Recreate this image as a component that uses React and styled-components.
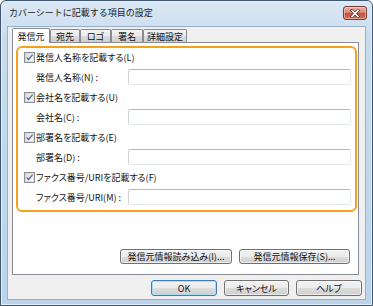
import React from 'react'
import styled, { createGlobalStyle } from 'styled-components'

const GlobalStyle = createGlobalStyle`
  html, body {
    margin: 0;
    padding: 0;
    background: #ffffff;
  }
  * {
    box-sizing: border-box;
  }
  body {
    font-family: "Noto Sans CJK JP", "Noto Sans", sans-serif;
    font-size: 9px;
    color: #111;
  }
`

const Window = styled.div`
  width: 373px;
  height: 306px;
  display: flex;
  flex-direction: column;
  border: 1px solid #3f5670;
  border-radius: 6px 6px 0 0;
  background: linear-gradient(180deg, #dbe8f5 0%, #c9dcef 12%, #bcd3ea 100%);
  box-shadow: inset 0 0 0 1px #e6eff8;
`

const TitleBar = styled.div`
  height: 25px;
  display: flex;
  align-items: center;
  justify-content: space-between;
  padding: 0 5px 3px 8px;
`

const Title = styled.span`
  font-size: 9px;
  line-height: 1;
  color: #222;
`

const CloseButton = styled.div`
  width: 24px;
  height: 14px;
  margin-top: 2px;
  display: flex;
  align-items: center;
  justify-content: center;
  border: 1px solid #7a3a34;
  border-radius: 3px;
  background: linear-gradient(180deg, #e8b0a4 0%, #d88c7c 45%, #c24f3c 50%, #d4705e 100%);
  box-shadow: inset 0 0 0 1px rgba(255, 220, 210, 0.5);
`

const Client = styled.div`
  flex: 1;
  margin: 0 6px 5px 6px;
  padding: 1px 2px 0 4px;
  background: #f0f0f0;
  border: 1px solid #9aafc6;
  display: flex;
  flex-direction: column;
  font-feature-settings: "palt";
`

const TabRow = styled.div`
  height: 14px;
  display: flex;
  align-items: flex-end;
  position: relative;
  z-index: 1;
`

const Tab = styled.div`
  width: ${(p) => p.$w}px;
  height: ${(p) => (p.$active ? 15 : 13)}px;
  margin-bottom: ${(p) => (p.$active ? -1 : 0)}px;
  display: flex;
  align-items: center;
  justify-content: center;
  border: 1px solid #898c95;
  border-bottom: none;
  border-radius: 2px 2px 0 0;
  background: ${(p) =>
    p.$active ? '#ffffff' : 'linear-gradient(180deg, #f3f3f3 0%, #ebebeb 50%, #dddddd 51%, #cfcfcf 100%)'};
  font-size: 9px;
  line-height: 1;
  padding-top: ${(p) => (p.$active ? 0 : 1)}px;
`

const Panel = styled.div`
  height: 233px;
  margin-right: 4px;
  border: 1px solid #898c95;
  background: #ffffff;
  padding: 3px 1px 10px 3px;
  display: flex;
  flex-direction: column;
`

const Highlight = styled.div`
  height: 166px;
  border: 2px solid #f6a11a;
  border-radius: 6px;
  padding: 1px 4px 0 6px;
  display: flex;
  flex-direction: column;
  gap: 4px;
`

const CheckRow = styled.label`
  height: 16px;
  display: flex;
  align-items: center;
  gap: 1px;
  line-height: 1;
`

const FieldRow = styled.div`
  height: 16px;
  display: flex;
  align-items: center;
  padding-left: 12px;
`

const FieldLabel = styled.span`
  width: 92px;
  line-height: 1;
`

const TextBox = styled.div`
  flex: 1;
  height: 16px;
  background: #ffffff;
  border: 1px solid #e2e8ee;
  border-top-color: #b7b9bf;
  border-left-color: #cfd2d6;
  border-radius: 2px;
`

const ButtonRow = styled.div`
  margin-top: auto;
  display: flex;
  justify-content: flex-end;
  gap: 7px;
  padding-right: ${(p) => p.$right || 0}px;
`

const Button = styled.div`
  width: ${(p) => p.$w}px;
  height: ${(p) => p.$h || 15}px;
  display: flex;
  align-items: center;
  justify-content: center;
  border: 1px solid ${(p) => (p.$default ? '#3c7fb1' : '#707070')};
  border-radius: 3px;
  background: linear-gradient(180deg, #f2f2f2 0%, #ebebeb 50%, #dddddd 51%, #cfcfcf 100%);
  box-shadow: inset 0 0 0 1px ${(p) => (p.$default ? '#a8dcf5' : 'rgba(255,255,255,0.6)')};
  font-size: 9px;
  line-height: 1;
  white-space: nowrap;
`

const BottomRow = styled(ButtonRow)`
  margin-top: 5px;
  padding-right: 1px;
`

function CheckBox() {
  return (
    <svg width="11" height="11" viewBox="0 0 11 11">
      <defs>
        <linearGradient id="cbg" x1="0" y1="0" x2="1" y2="1">
          <stop offset="0" stopColor="#dcdcdc" />
          <stop offset="1" stopColor="#ffffff" />
        </linearGradient>
      </defs>
      <rect x="0.5" y="0.5" width="10" height="10" fill="#fff" stroke="#8e8f8f" />
      <rect x="1.5" y="1.5" width="8" height="8" fill="url(#cbg)" stroke="#cdcdcd" strokeWidth="0.6" />
      <path d="M2.6 5.4 L4.5 7.6 L8.6 2.6" fill="none" stroke="#5a6d9e" strokeWidth="1.4" />
    </svg>
  )
}

function CloseIcon() {
  return (
    <svg width="10" height="9" viewBox="0 0 10 9">
      <path d="M2 1.5 L8 7.5 M8 1.5 L2 7.5" stroke="#5a2a26" strokeWidth="3" strokeLinecap="square" />
      <path d="M2 1.5 L8 7.5 M8 1.5 L2 7.5" stroke="#ffffff" strokeWidth="1.6" strokeLinecap="square" />
    </svg>
  )
}

const tabs = [
  { label: '発信元', w: 38, active: true },
  { label: '宛先', w: 30 },
  { label: 'ロゴ', w: 31 },
  { label: '署名', w: 32 },
  { label: '詳細設定', w: 44 },
]

const fields = [
  { check: '発信人名称を記載する(L)', label: '発信人名称(N) :' },
  { check: '会社名を記載する(U)', label: '会社名(C) :' },
  { check: '部署名を記載する(E)', label: '部署名(D) :' },
  { check: 'ファクス番号/URIを記載する(F)', label: 'ファクス番号/URI(M) :' },
]

function App() {
  return (
    <>
      <GlobalStyle />
      <Window>
        <TitleBar>
          <Title>カバーシートに記載する項目の設定</Title>
          <CloseButton>
            <CloseIcon />
          </CloseButton>
        </TitleBar>
        <Client>
          <TabRow>
            {tabs.map((tab) => (
              <Tab key={tab.label} $w={tab.w} $active={tab.active}>
                {tab.label}
              </Tab>
            ))}
          </TabRow>
          <Panel>
            <Highlight>
              {fields.map((field) => (
                <React.Fragment key={field.label}>
                  <CheckRow>
                    <CheckBox />
                    <span>{field.check}</span>
                  </CheckRow>
                  <FieldRow>
                    <FieldLabel>{field.label}</FieldLabel>
                    <TextBox />
                  </FieldRow>
                </React.Fragment>
              ))}
            </Highlight>
            <ButtonRow $right={7}>
              <Button $w={112}>発信元情報読み込み(I)...</Button>
              <Button $w={111}>発信元情報保存(S)...</Button>
            </ButtonRow>
          </Panel>
          <BottomRow>
            <Button $w={66} $h={16} $default>OK</Button>
            <Button $w={65} $h={16}>キャンセル</Button>
            <Button $w={66} $h={16}>ヘルプ</Button>
          </BottomRow>
        </Client>
      </Window>
    </>
  )
}

export default App
